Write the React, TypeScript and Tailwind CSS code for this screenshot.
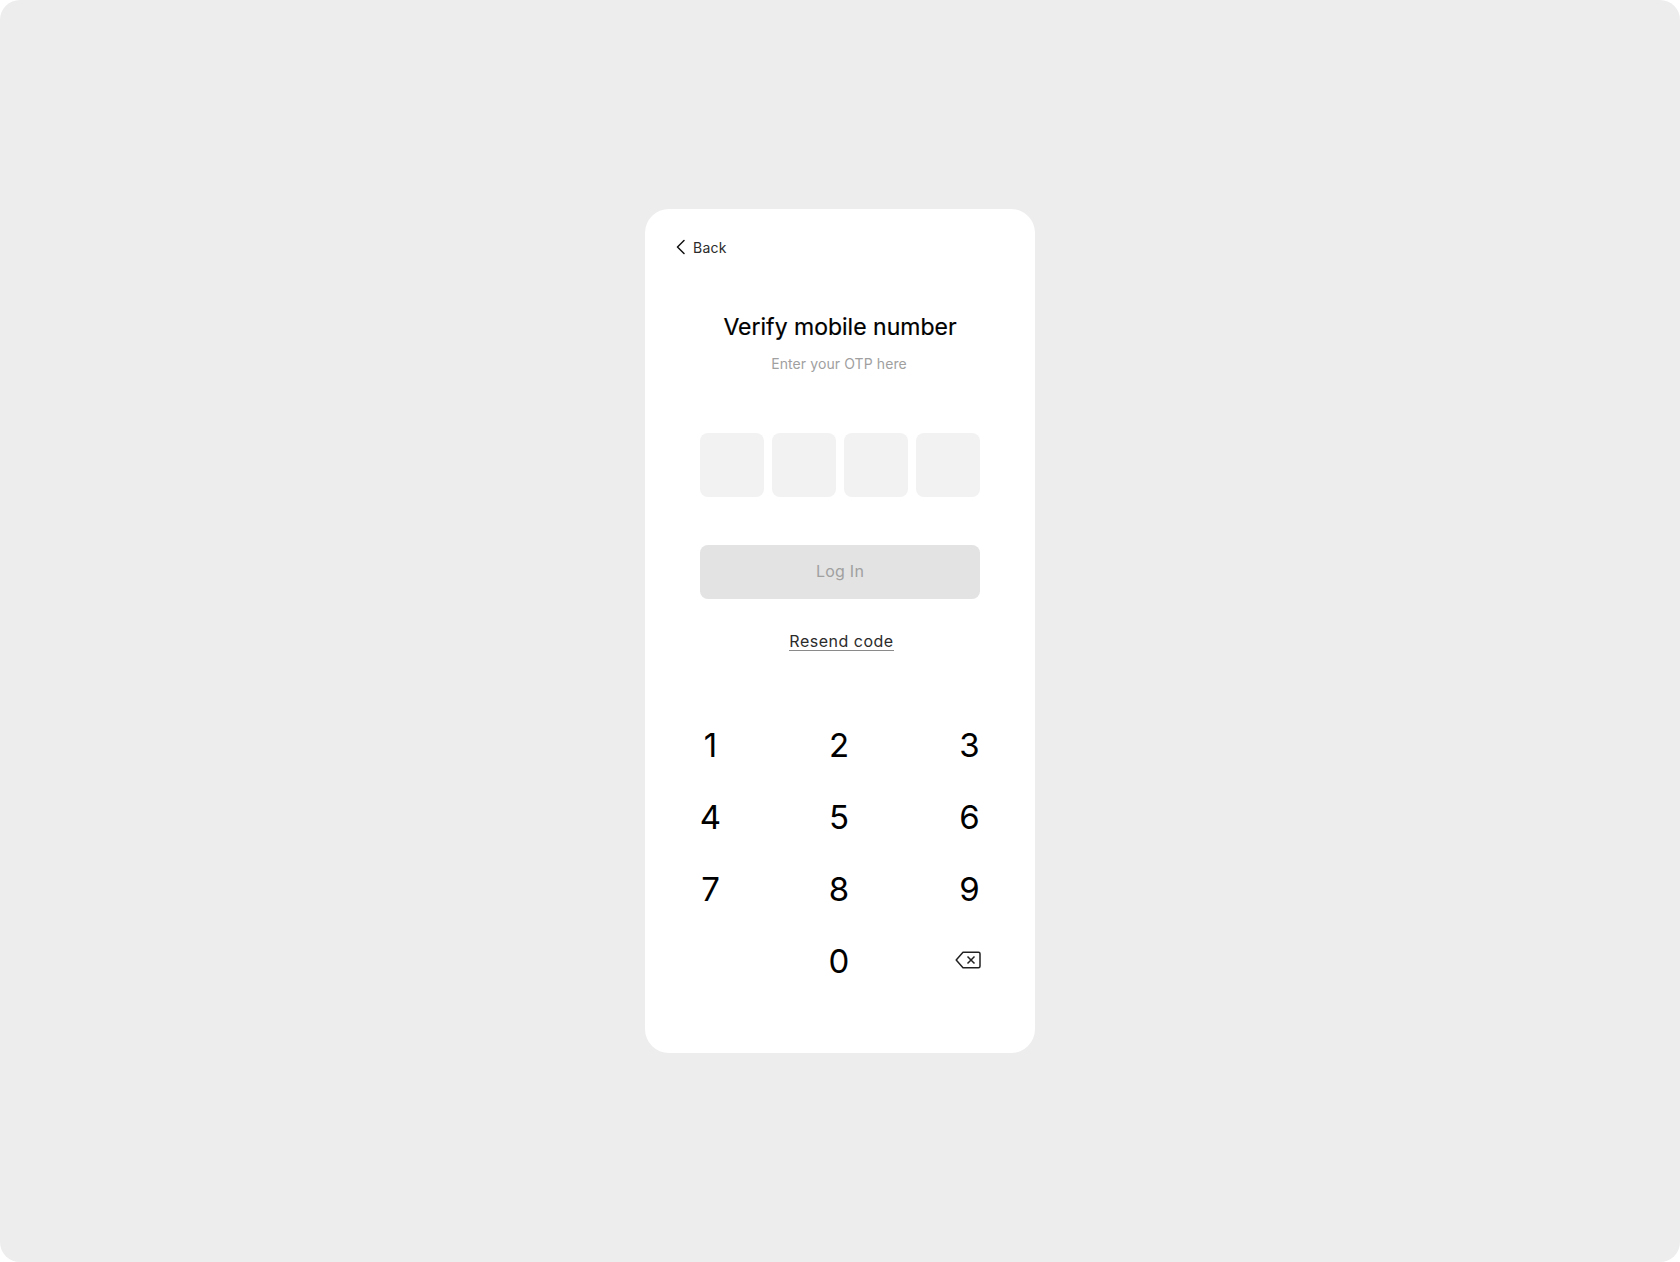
import React from "react";

const rows = [
  ["1", "2", "3"],
  ["4", "5", "6"],
  ["7", "8", "9"],
];

function Key({ children, last }: { children?: React.ReactNode; last?: boolean }) {
  return (
    <div className={last ? "flex h-[72px] items-center justify-center pl-[2px] text-[33px] font-normal leading-none text-black" : "flex h-[72px] items-center justify-center text-[33px] font-normal leading-none text-black"}>
      {children}
    </div>
  );
}

export default function App() {
  return (
    <div className="h-[1262px] w-full bg-white font-['Inter',sans-serif]">
      <div className="flex h-full w-full items-center justify-center rounded-[20px] bg-[#ededed]">
        <div className="flex h-[844px] w-[390px] flex-col rounded-[24px] bg-white">
          <div className="mt-[28px] flex h-[20px] items-center gap-[8px] pl-[31px] text-[14px] tracking-[0.25px] text-[#2b2b2b]">
            <svg width="9" height="16" viewBox="0 0 9 16" fill="none">
              <path d="M8 1.5L1.5 8L8 14.5" stroke="#111" strokeWidth="1.5" strokeLinecap="round" strokeLinejoin="round" />
            </svg>
            <span>Back</span>
          </div>
          <h1 className="mt-[55px] text-center text-[23px] font-normal leading-[30px] text-black [-webkit-text-stroke:0.2px_#000]">Verify mobile number</h1>
          <p className="mt-[12px] pr-[2px] text-center text-[14px] leading-[20px] tracking-[0.1px] text-[#a0a0a0]">Enter your OTP here</p>
          <div className="mt-[59px] flex justify-center gap-[8px]">
            {[0, 1, 2, 3].map((i) => (
              <div key={i} className="h-[64px] w-[64px] rounded-[8px] bg-[#f2f2f2]" />
            ))}
          </div>
          <div className="mx-auto mt-[48px] flex h-[54px] w-[280px] items-center justify-center rounded-[8px] bg-[#e3e3e3] pb-[2px] text-[16px] tracking-[0.25px] text-[#a0a0a0]">
            Log In
          </div>
          <div className="mt-[33px] flex justify-center pl-[3px]">
            <span className="border-b border-[#8a8a8a] text-[16px] leading-[18px] tracking-[0.5px] text-[#2b2b2b]">Resend code</span>
          </div>
          <div className="mt-[58px] grid grid-cols-[131px_126px_133px]">
            {rows.flat().map((d, i) => (
              <Key key={d} last={i % 3 === 2}>{d}</Key>
            ))}
            <Key />
            <Key>0</Key>
            <Key last>
              <svg width="26" height="18" viewBox="0 0 26 18" fill="none" className="mr-[3px] mb-[3px]">
                <path d="M8 1.2H23.5C24.4 1.2 25 1.8 25 2.7V15.3C25 16.2 24.4 16.8 23.5 16.8H8L1.2 9L8 1.2Z" stroke="#222" strokeWidth="1.5" strokeLinejoin="round" />
                <path d="M12.5 5.5L19.5 12.5M19.5 5.5L12.5 12.5" stroke="#222" strokeWidth="1.5" />
              </svg>
            </Key>
          </div>
        </div>
      </div>
    </div>
  );
}
